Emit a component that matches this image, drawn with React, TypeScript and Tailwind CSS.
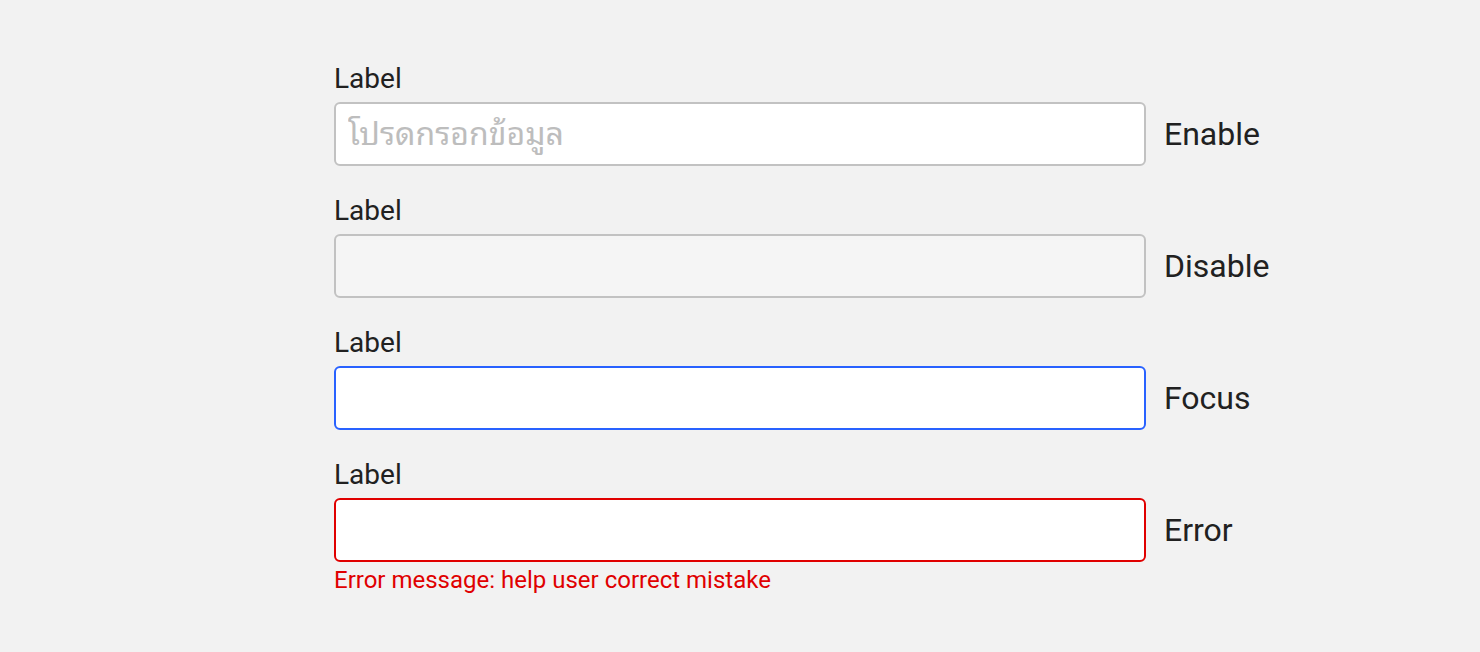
import React from 'react';

type FieldState = 'enable' | 'disable' | 'focus' | 'error';

const fields: { state: FieldState; note: string }[] = [
    { state: 'enable', note: 'Enable' },
    { state: 'disable', note: 'Disable' },
    { state: 'focus', note: 'Focus' },
    { state: 'error', note: 'Error' },
];

const inputClass: Record<FieldState, string> = {
    enable: 'bg-white border-[#c2c2c2]',
    disable: 'bg-[#f5f5f5] border-[#c2c2c2]',
    focus: 'bg-white border-[#2962ff]',
    error: 'bg-white border-[#e00000]',
};

const App = () => {
    return (
        <div className="min-h-screen bg-[#f2f2f2] text-[#212121] font-['Roboto','Noto_Sans_Thai_Looped','Loma','Garuda','Noto_Sans_Thai',sans-serif] pt-[59px]">
            <div className="grid grid-cols-[1fr_812px_1fr] gap-x-[18px] gap-y-[25px]">
                {fields.map((f) => (
                    <React.Fragment key={f.state}>
                        <div />
                        <div className="flex flex-col">
                            <label className="text-[28px] leading-[40px] mb-[3px]">Label</label>
                            <input
                                type="text"
                                disabled={f.state === 'disable'}
                                placeholder={f.state === 'enable' ? 'โปรดกรอกข้อมูล' : ''}
                                className={`h-16 w-full rounded-md border-2 px-3 text-[32px] outline-none placeholder:text-[#bdbdbd] ${inputClass[f.state]}`}
                            />
                            {f.state === 'error' && (
                                <p className="text-[24px] leading-8 mt-0.5 text-[#e00000]">Error message: help user correct mistake</p>
                            )}
                        </div>
                        <div className="pt-[43px]">
                            <span className="text-[32px] leading-[64px]">{f.note}</span>
                        </div>
                    </React.Fragment>
                ))}
            </div>
        </div>
    );
};

export default App;
